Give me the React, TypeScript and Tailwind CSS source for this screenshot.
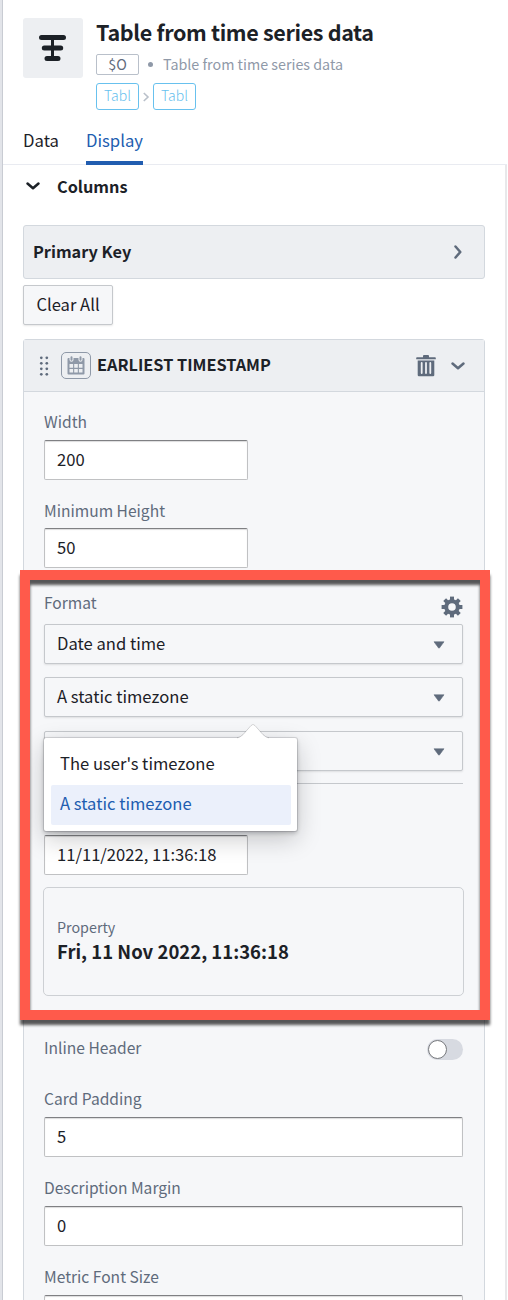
import { useState } from "react";
import type { ReactNode } from "react";

const Label = ({ children }: { children: ReactNode }) => (
  <div className="text-[15.6px] leading-5 text-[#5f6b7c] whitespace-nowrap">{children}</div>
);

const inputBase =
  "block h-10 shrink-0 rounded-[2px] bg-white px-[12px] pb-[2px] text-[16.6px] text-[#1c2127] outline-none border border-[#c0c1c3] border-t-[#7f8083] shadow-[inset_0_1px_1px_rgba(17,20,24,0.15)]";

function TextField({ value, wide }: { value: string; wide?: boolean }) {
  const [text, setText] = useState(value);
  return (
    <input
      className={`${inputBase} ${wide ? "w-[419px]" : "w-[204px]"}`}
      value={text}
      onChange={(e) => setText(e.target.value)}
    />
  );
}

function Select({ value }: { value: string }) {
  return (
    <button className="flex h-10 w-[419px] shrink-0 items-center justify-between rounded-[2px] border border-[#c5c8cc] bg-[#f6f7f9] pl-[12px] pr-[17px] text-[16.6px] text-[#1c2127] shadow-[0_1px_2px_rgba(17,20,24,0.1)]">
      <span className="pb-[2px]">{value}</span>
      <svg className="mt-px" width="12" height="8" viewBox="0 0 12 8">
        <path d="M1 .8h10L6.4 7q-.4.5-.8 0z" fill="#5f6b7c" stroke="#5f6b7c" strokeWidth=".6" />
      </svg>
    </button>
  );
}

function Chevron({ className, dir }: { className: string; dir: "down" | "right" }) {
  return (
    <svg className={className} width="16" height="16" viewBox="0 0 16 16" fill="none" stroke="currentColor" strokeWidth="2.5" strokeLinecap="round" strokeLinejoin="round">
      <path d={dir === "down" ? "M2.5 5.5 8 10.3l5.5-4.8" : "M5.5 2.5 10.3 8l-4.8 5.5"} />
    </svg>
  );
}

const WidgetIcon = () => (
  <svg width="28" height="28" viewBox="0 0 28 28" stroke="#1c2127" strokeLinecap="round">
    <path d="M13.5 3.5v21" strokeWidth="3" />
    <path d="M2.5 3.5h22M5.3 14h16.4M8 24.5h11" strokeWidth="5" />
  </svg>
);

const CalendarIcon = () => (
  <svg width="18" height="19" viewBox="0 0 18 19">
    <path d="M1.5 2h15a1 1 0 0 1 1 1v14.5a1 1 0 0 1-1 1h-15a1 1 0 0 1-1-1V3a1 1 0 0 1 1-1z" fill="#8f99a8" />
    <path d="M2.5 8h3.6v3.7H2.5zM7.2 8h3.6v3.7H7.2zM11.9 8h3.6v3.7h-3.6zM2.5 13h3.6v3.6H2.5zM7.2 13h3.6v3.6H7.2zM11.9 13h3.6v3.6h-3.6z" fill="#edeff2" />
    <path d="M4.5 1.5v2.3M13.5 1.5v2.3" stroke="#edeff2" strokeWidth="4" strokeLinecap="round" />
    <path d="M4.5 1.2v2.6M13.5 1.2v2.6" stroke="#8f99a8" strokeWidth="2" strokeLinecap="round" />
  </svg>
);

const TrashIcon = () => (
  <svg width="20" height="22" viewBox="0 0 20 22">
    <path d="M1 2.2h6V1q0-1 1-1h4q1 0 1 1v1.2h6q.8 0 .8.8v1.3H.2V3q0-.8.8-.8z" fill="#5f6b7c" />
    <path d="M1.7 5.6h16.6V20q0 1.200-1.200 1.200H2.900q-1.200 0-1.200-1.200z" fill="#5f6b7c" />
    <path d="M5.7 8v10M10 8v10M14.3 8v10" stroke="#edeff2" strokeWidth="1.8" strokeLinecap="round" />
  </svg>
);

const CogIcon = () => (
  <svg width="22" height="22" viewBox="0 0 22 22" fill="none" stroke="#5f6b7c">
    <circle cx="11" cy="11" r="5.8" strokeWidth="4" />
    {[0, 45, 90, 135, 180, 225, 270, 315].map((a) => (
      <path key={a} d="M11 4.5V.6" strokeWidth="4" transform={`rotate(${a} 11 11)`} />
    ))}
  </svg>
);

const DragHandle = () => (
  <svg width="10" height="20" viewBox="0 0 10 20" fill="#5f6b7c">
    {[1.8, 7.3, 12.8, 18.3].map((y) => (
      <g key={y}>
        <circle cx="2.3" cy={y} r="1.35" />
        <circle cx="7.8" cy={y} r="1.35" />
      </g>
    ))}
  </svg>
);

function Header() {
  return (
    <div className="flex h-[120px] shrink-0 gap-[13px] pl-5 pt-[18px]">
      <div className="flex size-[60px] items-center justify-center rounded-[3px] bg-[#edeff2]">
        <WidgetIcon />
      </div>
      <div>
        <h1 className="h-9 whitespace-nowrap text-[21.5px] font-bold leading-[28px] tracking-[-0.34px] text-[#1c2127]">Table from time series data</h1>
        <div className="flex h-[21px] items-center text-[14.3px] text-[#8f99a8]">
          <span className="flex h-[21px] w-[43px] items-center justify-center rounded-[2px] border border-[#b9c0ca] pb-[2px] text-[#5f6b7c]">$O</span>
          <span className="ml-[9px] size-[5px] rounded-full bg-[#8f99a8]" />
          <span className="ml-[10px] whitespace-nowrap pb-[2px]">Table from time series data</span>
        </div>
        <div className="mt-2 flex items-center text-[14px] font-light text-[#68c1ee]">
          <span className="flex h-[27px] w-[43px] items-center justify-center rounded-[3px] border border-[#68c1ee] pb-[2px]">Tabl</span>
          <svg className="mx-[3px]" width="8" height="12" viewBox="0 0 8 12" fill="none" stroke="#b9c0ca" strokeWidth="1.6">
            <path d="M1.8 2 6 6l-4.200 4" />
          </svg>
          <span className="flex h-[27px] w-[43px] items-center justify-center rounded-[3px] border border-[#68c1ee] pb-[2px]">Tabl</span>
        </div>
      </div>
    </div>
  );
}

function TimezoneMenu() {
  return (
    <div className="absolute left-0 top-[7px] z-10 h-[93px] w-[253px] rounded-[2px] bg-white p-[7px] shadow-[0_0_0_1px_rgba(17,20,24,0.12),0_2px_4px_rgba(17,20,24,0.25),0_8px_24px_rgba(17,20,24,0.22)]">
      <svg className="absolute left-[192px] top-[-15px]" width="34" height="16" viewBox="0 0 34 16">
        <path d="M0 15.5q4-.5 7-3.500l8-9.500q2-2.500 4 0l8 9.500q3 3 7 3.500v.5H0z" fill="#fff" />
        <path d="M1 14.9q3.500-.8 6-3.300l8-9q2-2.500 4 0l8 9q2.500 2.500 6 3.300" fill="none" stroke="#111418" strokeOpacity=".17" />
      </svg>
      <div className="flex h-10 items-center rounded-[2px] px-[9px] pb-[3px] text-[16.6px]">The user's timezone</div>
      <div className="flex h-10 w-60 items-center rounded-[2px] bg-[#ebf0fb] px-[9px] pb-[3px] text-[16.6px] text-[#215db0]">A static timezone</div>
    </div>
  );
}

function ColumnCard() {
  return (
    <div className="mt-[14px] w-[462px] shrink-0 rounded-t-[3px] border border-[#d3d8de] bg-[#f6f7f9]">
      <div className="flex h-[52px] items-center border-b border-[#d3d8de] bg-[#edeff2] pl-[15px] pr-[18px]">
        <DragHandle />
        <div className="ml-[12px] flex h-[27px] w-[30px] items-center justify-center rounded-[5px] border border-[#8f99a8]">
          <CalendarIcon />
        </div>
        <span className="ml-[6px] pb-[3px] text-[16.3px] font-bold">EARLIEST TIMESTAMP</span>
        <span className="ml-auto">
          <TrashIcon />
        </span>
        <Chevron dir="down" className="ml-[14px] text-[#5f6b7c]" />
      </div>

      <div className="relative flex flex-col pl-5 pt-[19px]">
        <Label>Width</Label>
        <div className="h-[9px]" />
        <TextField value="200" />
        <div className="pb-2 pt-5">
          <Label>Minimum Height</Label>
        </div>
        <TextField value="50" />

        {/* Format */}
        <div className="mt-6 flex h-8 w-[419px] justify-between">
          <Label>Format</Label>
          <span className="mt-[4px]">
            <CogIcon />
          </span>
        </div>
        <div className="flex flex-col gap-[13px]">
          <Select value="Date and time" />
          <Select value="A static timezone" />
        </div>
        <div className="relative mt-[14px] h-[104px]">
          <Select value="" />
          <div className="mt-[12px] h-px w-[419px] bg-[#c5c8cc]" />
          <TimezoneMenu />
        </div>
        <TextField value="11/11/2022, 11:36:18" />
        <div className="ml-[-1px] mt-3 h-[109px] w-[421px] rounded-[5px] border border-[#cdd0d4] pl-[13px] pt-[29px]">
          <div className="text-[14.3px] leading-5 text-[#5f6b7c]">Property</div>
          <div className="text-[18.5px] font-bold leading-7">Fri, 11 Nov 2022, 11:36:18</div>
        </div>

        <div className="mt-[41px] flex h-[51px] w-[419px] justify-between">
          <Label>Inline Header</Label>
          <button className="mt-[2px] flex h-[21px] w-9 items-center rounded-full bg-[#d7dae1] pl-px">
            <span className="size-[19px] rounded-full border border-[#77797d] bg-white" />
          </button>
        </div>
        <Label>Card Padding</Label>
        <div className="h-[9px]" />
        <TextField value="5" wide />
        <div className="pb-[9px] pt-5">
          <Label>Description Margin</Label>
        </div>
        <TextField value="0" wide />
        <div className="pb-[9px] pt-5">
          <Label>Metric Font Size</Label>
        </div>
        <TextField value="" wide />

        {/* highlight box around the format section */}
        <div className="pointer-events-none absolute left-[-4px] top-[178px] z-20 h-[450px] w-[470px] border-[10px] border-[#ff5a4b] drop-shadow-[0_5px_1.5px_rgba(0,0,0,0.65)]" />
      </div>
    </div>
  );
}

export default function App() {
  return (
    <div className="flex h-[1300px] w-[508px] overflow-hidden bg-white font-['Noto_Sans_CJK_SC','Noto_Sans_CJK_JP',sans-serif] text-[#1c2127]">
      <div className="w-[3px] shrink-0 border-r border-[#c9ccd3] bg-[#e2e4e9]" />
      <div className="flex w-[504px] shrink-0 flex-col overflow-hidden">
        <Header />
        <div className="flex h-[45px] shrink-0 gap-[27px] border-b border-[#e9ebf1] pl-5 text-[16.7px]">
          <div className="h-[45px] leading-[41px]">Data</div>
          <div className="h-[45px] border-b-4 border-[#215db0] leading-[41px] text-[#215db0]">Display</div>
        </div>
        <div className="flex grow flex-col border-r-2 border-[#e8e8ea] pl-5">
          <div className="flex h-[60px] shrink-0 pl-[3px]">
            <Chevron dir="down" className="ml-[-1px] mt-[13px]" />
            <span className="ml-[16px] text-[16.3px] font-bold leading-[42px]">Columns</span>
          </div>
          <div className="flex h-[54px] w-[462px] shrink-0 items-center justify-between rounded-[3px] border border-[#d3d8de] bg-[#edeff2] pl-[9px] pr-[18px]">
            <span className="pb-[2px] text-[16.3px] font-bold">Primary Key</span>
            <Chevron dir="right" className="text-[#5f6b7c]" />
          </div>
          <button className="mt-[6px] h-10 w-[90px] shrink-0 rounded-[2px] border border-[#c5c8cc] bg-[#f6f7f9] pb-[2px] text-[16.6px] shadow-[0_1px_2px_rgba(17,20,24,0.1)]">Clear All</button>
          <ColumnCard />
        </div>
      </div>
    </div>
  );
}
